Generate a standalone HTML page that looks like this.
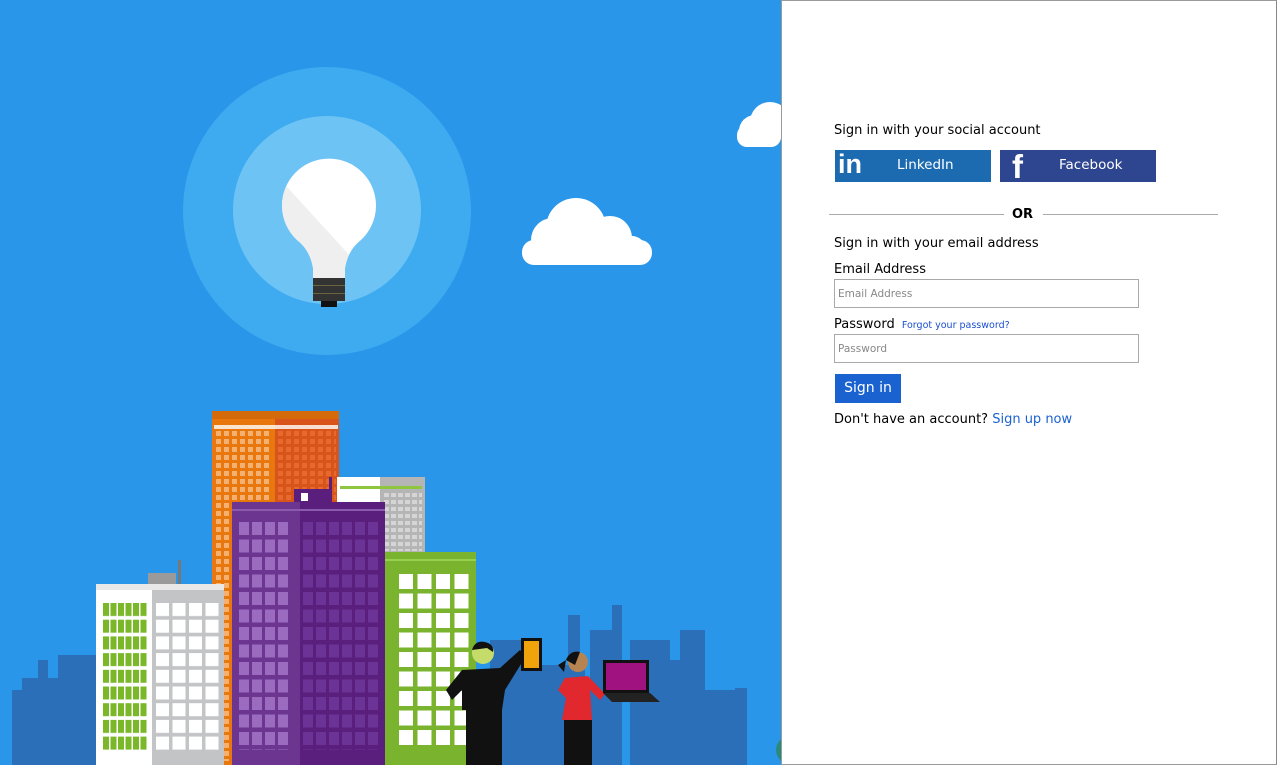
<!DOCTYPE html>
<html><head><meta charset="utf-8"><style>
*{margin:0;padding:0;box-sizing:border-box}
body{width:1277px;height:765px;overflow:hidden;background:#2a96e9;font-family:"DejaVu Sans","Liberation Sans",sans-serif;position:relative}
#art{position:absolute;left:0;top:0}
#panel{position:absolute;left:781px;top:0;width:496px;height:765px;background:#fff;border:1px solid #9a9a9a;border-right-color:#888}
.t{position:absolute;font-size:13px;color:#000;white-space:nowrap}
.btn{position:absolute;top:149px;height:32px;width:156px;color:#fff;font-size:14px}
.inp{position:absolute;left:52px;width:305px;height:29px;border:1px solid #a9a9a9;font-size:10.5px;color:#888;padding:8px 0 0 3px}
</style></head><body>
<svg id="art" width="781" height="765" viewBox="0 0 781 765">
<defs>
<pattern id="po" x="216" y="431" width="8" height="8" patternUnits="userSpaceOnUse"><rect width="5" height="5" fill="#f5b071"/></pattern>
<pattern id="pr" x="278" y="431" width="8" height="8" patternUnits="userSpaceOnUse"><rect width="5" height="5" fill="#e66a2e"/></pattern>
<pattern id="pg" x="384" y="493" width="7" height="7" patternUnits="userSpaceOnUse"><rect width="5" height="4" fill="#d5d5d5"/></pattern>
<pattern id="pp1" x="239" y="522" width="13" height="17.5" patternUnits="userSpaceOnUse"><rect width="10" height="13" fill="#9a6bbf"/></pattern>
<pattern id="pp2" x="303" y="522" width="13" height="17.5" patternUnits="userSpaceOnUse"><rect width="10" height="13" fill="#6a3395"/></pattern>
<pattern id="pgw" x="103" y="603" width="7.5" height="16.7" patternUnits="userSpaceOnUse"><rect width="6" height="13" fill="#7ab82a"/></pattern>
<pattern id="pww" x="156" y="603" width="16.5" height="16.7" patternUnits="userSpaceOnUse"><rect width="13" height="13" fill="#fff"/></pattern>
<pattern id="pgr" x="399" y="574" width="18.5" height="19.5" patternUnits="userSpaceOnUse"><rect width="14" height="15" fill="#fff"/></pattern>
<clipPath id="bulb"><path d="M313 278 L313 268 Q310 250 297 240 A47 47 0 1 1 361 240 Q348 250 345 268 L345 278Z"/></clipPath>
</defs>
<rect width="781" height="765" fill="#2a96e9"/>
<circle cx="327" cy="211" r="144" fill="#3eaaf0"/>
<circle cx="327" cy="210" r="94" fill="#6cc3f4"/>
<g clip-path="url(#bulb)">
<rect x="270" y="150" width="120" height="140" fill="#fff"/>
<path d="M260 160 L288 188 L352 258 L352 300 L260 300Z" fill="#efefef"/>
</g>
<rect x="313" y="278" width="32" height="23" fill="#333"/>
<rect x="313" y="285" width="32" height="1" fill="#6a6440"/><rect x="313" y="293" width="32" height="1" fill="#6a6440"/>
<rect x="321" y="301" width="16" height="6" fill="#111"/>
<g fill="#fff">
<circle cx="553" cy="240" r="22"/><circle cx="576" cy="228" r="30"/><circle cx="610" cy="238" r="22"/><circle cx="632" cy="250" r="14"/>
<rect x="522" y="240" width="130" height="25" rx="12"/>
<circle cx="770" cy="122" r="20"/><circle cx="755" cy="131" r="16"/><rect x="737" y="125" width="44" height="22" rx="10"/>
</g>
<g fill="#2a6fb8">
<rect x="12" y="690" width="30" height="75"/><rect x="38" y="660" width="10" height="105"/><rect x="58" y="655" width="40" height="110"/><rect x="22" y="678" width="50" height="87"/>
<rect x="490" y="640" width="40" height="125"/><rect x="568" y="615" width="12" height="150"/><rect x="590" y="630" width="30" height="135"/><rect x="612" y="605" width="10" height="160"/><rect x="630" y="640" width="40" height="125"/><rect x="668" y="660" width="20" height="105"/><rect x="680" y="630" width="25" height="135"/><rect x="700" y="690" width="40" height="75"/><rect x="735" y="688" width="12" height="77"/>
<rect x="525" y="665" width="60" height="100"/>
</g>
<rect x="212" y="411" width="63" height="354" fill="#e8780e"/>
<rect x="275" y="411" width="64" height="354" fill="#d9541a"/>
<rect x="212" y="411" width="127" height="8" fill="#d46a0a"/>
<rect x="214" y="425" width="124" height="4" fill="#fff" opacity=".8"/>
<rect x="216" y="431" width="56" height="330" fill="url(#po)"/>
<rect x="278" y="431" width="58" height="70" fill="url(#pr)"/>
<rect x="337" y="477" width="44" height="80" fill="#fff"/>
<rect x="380" y="477" width="45" height="80" fill="#b5b5b5"/>
<rect x="340" y="486" width="82" height="3" fill="#8ec63f"/>
<rect x="384" y="493" width="38" height="58" fill="url(#pg)"/>
<rect x="294" y="489" width="36" height="16" fill="#5a1f7c"/>
<rect x="301" y="493" width="7" height="8" fill="#fff"/>
<rect x="329" y="477" width="3" height="28" fill="#5a1f7c"/>
<rect x="232" y="502" width="68" height="263" fill="#6b3590"/>
<rect x="300" y="502" width="85" height="263" fill="#5a1f7c"/>
<rect x="232" y="509" width="153" height="2" fill="#8a5aad"/>
<rect x="239" y="522" width="52" height="228" fill="url(#pp1)"/>
<rect x="303" y="522" width="78" height="228" fill="url(#pp2)"/>
<rect x="148" y="573" width="28" height="12" fill="#9a9a9a"/>
<rect x="178" y="560" width="3" height="25" fill="#777"/>
<rect x="96" y="584" width="56" height="181" fill="#fff"/>
<rect x="152" y="584" width="72" height="181" fill="#c3c4c6"/>
<rect x="96" y="584" width="128" height="6" fill="#e8e8e8"/>
<rect x="103" y="603" width="44" height="148" fill="url(#pgw)"/>
<rect x="156" y="603" width="65" height="148" fill="url(#pww)"/>
<rect x="385" y="552" width="91" height="213" fill="#7ab32e"/>
<rect x="385" y="559" width="91" height="2" fill="#9ad050"/>
<rect x="399" y="574" width="72" height="175" fill="url(#pgr)"/>
<g>
<circle cx="483" cy="653" r="11" fill="#c6dc6a"/>
<path d="M472 650 Q475 640 485 642 Q494 644 493 652 L487 648Z" fill="#111"/>
<path d="M462 670 L500 668 L520 650 L526 656 L505 690 L502 710 L462 710 L462 690 L452 700 L446 690Z" fill="#111"/>
<rect x="466" y="708" width="36" height="57" fill="#111"/>
<rect x="521" y="638" width="21" height="33" fill="#111"/><rect x="524" y="641" width="15" height="27" fill="#f0a30a"/>
<circle cx="578" cy="662" r="10" fill="#b58452"/>
<path d="M566 660 Q570 650 580 652 L575 665Z M558 665 L566 660 L564 672Z" fill="#111"/>
<path d="M565 678 L588 676 L605 694 L600 700 L590 690 L592 720 L562 720 L566 698 L558 690Z" fill="#e0282e"/>
<rect x="564" y="720" width="28" height="45" fill="#111"/>
<rect x="603" y="660" width="46" height="33" fill="#111"/><rect x="606" y="663" width="40" height="27" fill="#a0127f"/>
<path d="M603 693 L650 693 L660 702 L612 702Z" fill="#222"/>
</g>
<circle cx="790" cy="750" r="14" fill="#2a8a7a"/>
</svg>
<div id="panel">
<div class="t" style="left:52px;top:122px">Sign in with your social account</div>
<div class="btn" style="left:53px;background:#1c6bb1"><span style="position:absolute;left:3px;top:-1px;font-size:27px;font-weight:bold;font-family:'Liberation Sans',sans-serif">in</span><span style="position:absolute;left:62px;top:7px;font-size:13.5px">LinkedIn</span></div>
<div class="btn" style="left:218px;background:#2e4690"><span style="position:absolute;left:12px;top:-2px;font-size:33px;font-weight:bold;font-family:'Liberation Sans',sans-serif">f</span><span style="position:absolute;left:59px;top:7px;font-size:13.5px">Facebook</span></div>
<div style="position:absolute;left:47px;top:213px;width:175px;height:1px;background:#aaa"></div>
<div style="position:absolute;left:261px;top:213px;width:175px;height:1px;background:#aaa"></div>
<div class="t" style="left:230px;top:206px;font-weight:bold;font-size:13px">OR</div>
<div class="t" style="left:52px;top:235px">Sign in with your email address</div>
<div class="t" style="left:52px;top:261px">Email Address</div>
<div class="inp" style="top:278px">Email Address</div>
<div class="t" style="left:52px;top:316px">Password <span style="font-size:9.5px;color:#1a4fd0;margin-left:3px">Forgot your password?</span></div>
<div class="inp" style="top:333px">Password</div>
<div style="position:absolute;left:53px;top:373px;width:66px;height:29px;background:#1a62d0;color:#fff;font-size:14px;text-align:center;line-height:29px">Sign in</div>
<div class="t" style="left:52px;top:411px;font-size:13px">Don't have an account? <span style="color:#1a62d0">Sign up now</span></div>
</div>
</body></html>
